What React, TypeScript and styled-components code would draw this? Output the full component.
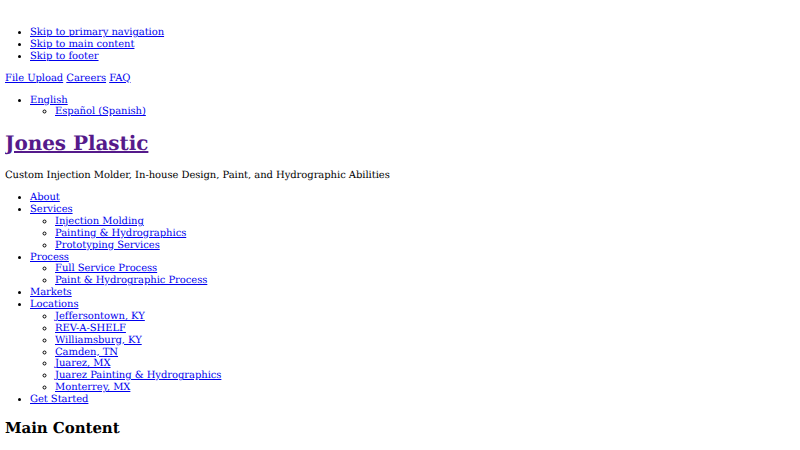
import React from "react";
import styled, { createGlobalStyle } from "styled-components";

const GlobalStyle = createGlobalStyle`
  body {
    margin: 5px;
    font-family: "DejaVu Serif", serif;
    font-size: 10px;
    line-height: 11.875px;
    letter-spacing: -0.06px;
    color: #000;
    background: #fff;
    text-rendering: geometricPrecision;
  }
`;

const Link = styled.a<{ $visited?: boolean }>`
  color: ${({ $visited }) => ($visited ? "#551a8b" : "#0000ee")};
  text-decoration: underline;
`;

const List = styled.ul<{ $top?: number }>`
  margin: ${({ $top }) => $top ?? 10}px 0 10px;
  padding-left: 25px;
  list-style: disc;
`;

const SubList = styled.ul`
  margin: 0;
  padding-left: 25px;
  list-style: circle;
`;

const TopLinks = styled.div`
  margin: 10px 0;
`;

const SiteTitle = styled.h1`
  font-size: 20px;
  line-height: 23.3px;
  font-weight: bold;
  margin: 13.4px 0 15.4px;
`;

const Tagline = styled.p`
  margin: 10px 0 9px;
`;

const MainHeading = styled.h2`
  font-size: 15px;
  line-height: 17.5px;
  font-weight: bold;
  margin: 14.5px 0 12.45px;
`;

type NavItem = { label: string; children?: string[] };

const nav: NavItem[] = [
  { label: "About" },
  {
    label: "Services",
    children: ["Injection Molding", "Painting & Hydrographics", "Prototyping Services"],
  },
  { label: "Process", children: ["Full Service Process", "Paint & Hydrographic Process"] },
  { label: "Markets" },
  {
    label: "Locations",
    children: [
      "Jeffersontown, KY",
      "REV-A-SHELF",
      "Williamsburg, KY",
      "Camden, TN",
      "Juarez, MX",
      "Juarez Painting & Hydrographics",
      "Monterrey, MX",
    ],
  },
  { label: "Get Started" },
];

export default function App() {
  return (
    <>
      <GlobalStyle />
      <List $top={22}>
        <li><Link href="#">Skip to primary navigation</Link></li>
        <li><Link href="#">Skip to main content</Link></li>
        <li><Link href="#">Skip to footer</Link></li>
      </List>
      <TopLinks>
        <Link href="#">File Upload</Link> <Link href="#">Careers</Link>{" "}
        <Link href="#">FAQ</Link>
      </TopLinks>
      <List>
        <li>
          <Link href="#">English</Link>
          <SubList>
            <li><Link href="#">Español (Spanish)</Link></li>
          </SubList>
        </li>
      </List>
      <SiteTitle>
        <Link href="#" $visited>Jones Plastic</Link>
      </SiteTitle>
      <Tagline>Custom Injection Molder, In-house Design, Paint, and Hydrographic Abilities</Tagline>
      <List>
        {nav.map((item) => (
          <li key={item.label}>
            <Link href="#">{item.label}</Link>
            {item.children && (
              <SubList>
                {item.children.map((c) => (
                  <li key={c}><Link href="#">{c}</Link></li>
                ))}
              </SubList>
            )}
          </li>
        ))}
      </List>
      <MainHeading>Main Content</MainHeading>
    </>
  );
}
